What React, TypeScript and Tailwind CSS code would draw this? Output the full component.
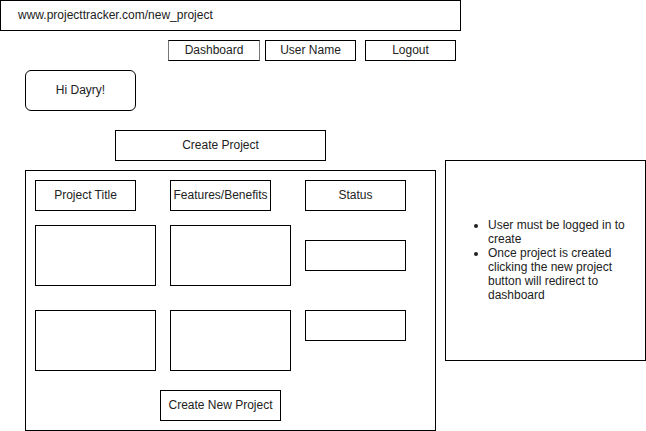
export default function App() {
  return (
    <div className="w-[646px] h-[431px] bg-white text-[#222] text-[12px] leading-[14px] font-['Liberation_Sans',Arial,sans-serif] overflow-hidden">
      {/* Address bar */}
      <div className="w-[461px] h-[31px] border border-black flex items-center pl-[17px] pb-[2px]">
        www.projecttracker.com/new_project
      </div>

      {/* Top nav */}
      <div className="flex mt-[9px] ml-[168px]">
        <NavBox className="w-[92px] border-x-[#777]">Dashboard</NavBox>
        <NavBox className="w-[91px] ml-[5px]">User Name</NavBox>
        <NavBox className="w-[91px] ml-[9px]">Logout</NavBox>
      </div>

      {/* Greeting */}
      <div className="mt-[9px] ml-[25px] w-[111px] h-[41px] border border-black rounded-[6px] flex items-center justify-center pb-[2px]">
        Hi Dayry!
      </div>

      <div className="flex items-start mt-[19px]">
        {/* Left column: create form */}
        <div className="ml-[25px] w-[411px]">
          <Box className="ml-[90px] w-[211px] h-[31px]">Create Project</Box>

          <div className="mt-[9px] h-[261px] border border-black pt-[9px] pl-[9px]">
            <div className="grid grid-cols-[135px_135px_101px]">
              <Box className="w-[101px] h-[31px]">Project Title</Box>
              <Box className="w-[101px] h-[31px]">Features/Benefits</Box>
              <Box className="w-[101px] h-[31px]">Status</Box>

              <Box className="mt-[14px] w-[121px] h-[61px]" />
              <Box className="mt-[14px] w-[121px] h-[61px]" />
              <Box className="mt-[14px] w-[101px] h-[31px] self-center" />

              <Box className="mt-[24px] w-[121px] h-[61px]" />
              <Box className="mt-[24px] w-[121px] h-[61px]" />
              <Box className="mt-[24px] w-[101px] h-[31px] self-start" />
            </div>

            <Box className="mt-[19px] ml-[125px] w-[121px] h-[31px]">
              Create New Project
            </Box>
          </div>
        </div>

        {/* Notes */}
        <div className="ml-[9px] mt-[30px] w-[201px] h-[201px] border border-black flex items-center pb-[2px]">
          <ul className="list-disc pl-[42px] w-[192px]">
            <li>User must be logged in to create</li>
            <li>
              Once project is created clicking the new project button will
              redirect to dashboard
            </li>
          </ul>
        </div>
      </div>
    </div>
  );
}

function NavBox({
  className,
  children,
}: {
  className: string;
  children: React.ReactNode;
}) {
  return (
    <div
      className={`h-[21px] border border-black flex items-center justify-center pb-[2px] ${className}`}
    >
      {children}
    </div>
  );
}

function Box({
  className,
  children,
}: {
  className: string;
  children?: React.ReactNode;
}) {
  return (
    <div
      className={`border border-black flex items-center justify-center whitespace-nowrap pb-[2px] ${className}`}
    >
      {children}
    </div>
  );
}
